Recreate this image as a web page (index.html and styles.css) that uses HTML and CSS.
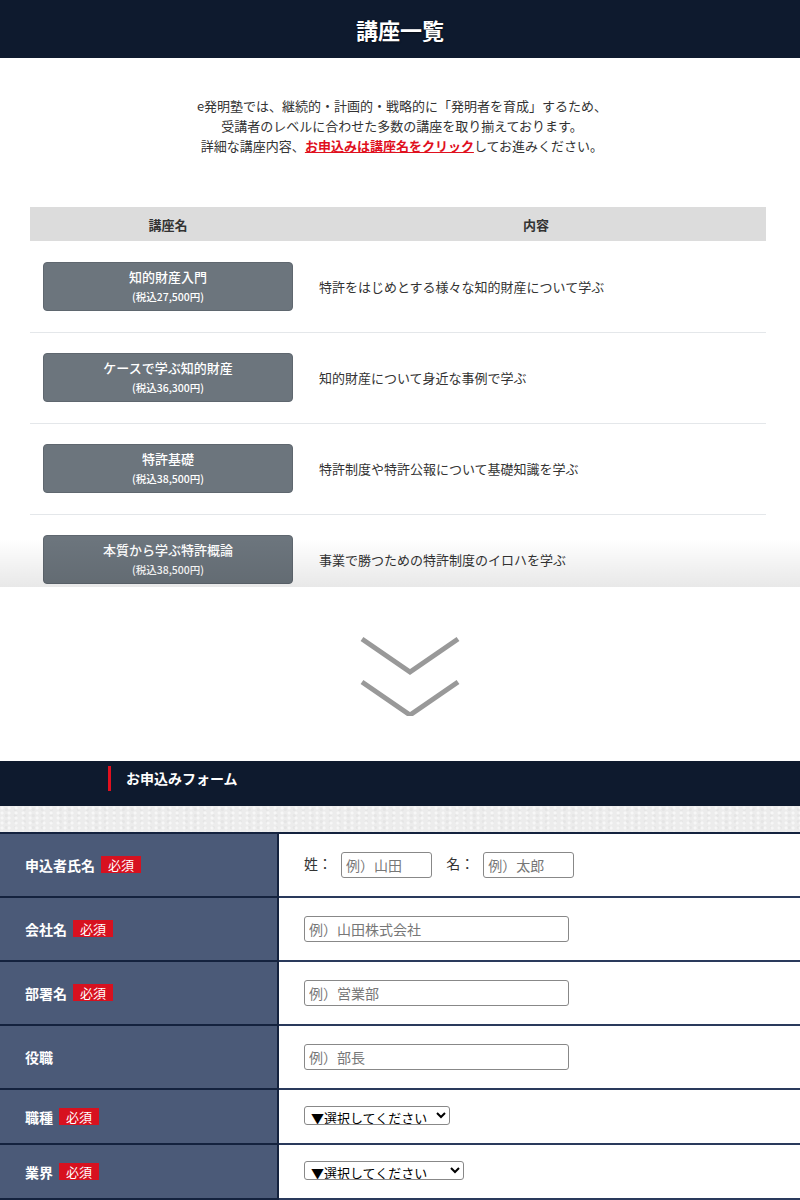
FILE: index.html
```html
<!DOCTYPE html>
<html lang="ja">
<head>
  <meta charset="UTF-8">
  <meta name="viewport" content="width=device-width, initial-scale=1">
  <title>講座一覧</title>
  <link rel="stylesheet" href="styles.css">
</head>
<body>

  <header class="page-title">
    <h1>講座一覧</h1>
  </header>

  <section class="courses">
    <p class="lead">
      e発明塾では、継続的・計画的・戦略的に「発明者を育成」するため、<br>
      受講者のレベルに合わせた多数の講座を取り揃えております。<br>
      詳細な講座内容、<a href="#form" class="lead-link">お申込みは講座名をクリック</a>してお進みください。
    </p>

    <table class="course-table">
      <thead>
        <tr>
          <th class="col-name">講座名</th>
          <th>内容</th>
        </tr>
      </thead>
      <tbody>
        <tr>
          <td><a href="#form" class="course-btn">知的財産入門<small>(税込27,500円)</small></a></td>
          <td>特許をはじめとする様々な知的財産について学ぶ</td>
        </tr>
        <tr>
          <td><a href="#form" class="course-btn">ケースで学ぶ知的財産<small>(税込36,300円)</small></a></td>
          <td>知的財産について身近な事例で学ぶ</td>
        </tr>
        <tr>
          <td><a href="#form" class="course-btn">特許基礎<small>(税込38,500円)</small></a></td>
          <td>特許制度や特許公報について基礎知識を学ぶ</td>
        </tr>
        <tr>
          <td><a href="#form" class="course-btn">本質から学ぶ特許概論<small>(税込38,500円)</small></a></td>
          <td>事業で勝つための特許制度のイロハを学ぶ</td>
        </tr>
      </tbody>
    </table>
    <div class="fade"></div>
  </section>

  <div class="arrow">
    <svg width="100" height="80" viewBox="0 0 100 80" aria-hidden="true">
      <polyline points="2,3 50,36 98,3" fill="none" stroke="#999" stroke-width="5"/>
      <polyline points="2,46 50,79 98,46" fill="none" stroke="#999" stroke-width="5"/>
    </svg>
  </div>

  <div class="form-head" id="form">
    <h2>お申込みフォーム</h2>
  </div>
  <div class="texture"></div>

  <table class="entry-form">
    <tr>
      <th>申込者氏名<span class="req">必須</span></th>
      <td>
        <label class="name-label">姓：</label><input class="input-s" type="text" placeholder="例）山田">
        <label class="name-label name-gap">名：</label><input class="input-s" type="text" placeholder="例）太郎">
      </td>
    </tr>
    <tr>
      <th>会社名<span class="req">必須</span></th>
      <td><input class="input-l" type="text" placeholder="例）山田株式会社"></td>
    </tr>
    <tr>
      <th>部署名<span class="req">必須</span></th>
      <td><input class="input-l" type="text" placeholder="例）営業部"></td>
    </tr>
    <tr>
      <th>役職</th>
      <td><input class="input-l" type="text" placeholder="例）部長"></td>
    </tr>
    <tr class="row-select">
      <th>職種<span class="req">必須</span></th>
      <td>
        <select class="select-job">
          <option>▼選択してください</option>
        </select>
      </td>
    </tr>
    <tr class="row-select">
      <th>業界<span class="req">必須</span></th>
      <td>
        <select class="select-ind">
          <option>▼選択してください</option>
        </select>
      </td>
    </tr>
  </table>

</body>
</html>
```

FILE: styles.css
```css
/* ベース */
* { box-sizing: border-box; }

body {
  margin: 0;
  font-family: "Noto Sans CJK JP", "Noto Sans", sans-serif;
  color: #333;
  background: #fff;
}

/* ページタイトル */
.page-title {
  background: #0e1a2e;
  height: 58px;
  display: flex;
  align-items: center;
  justify-content: center;
}
.page-title h1 {
  margin: 0;
  color: #fff;
  font-size: 22px;
  font-weight: 700;
  text-shadow: 0 1px 2px rgba(0,0,0,0.5);
}

/* 講座一覧 */
.courses {
  position: relative;
  height: 529px;
  overflow: hidden;
  padding: 38px 30px 0 34px;
}
.lead {
  margin: 0 0 51px;
  text-align: center;
  font-size: 13px;
  line-height: 20px;
  color: #333;
}
.lead-link {
  color: #e0101e;
  font-weight: 700;
  text-decoration: underline;
}

.course-table {
  width: 736px;
  margin-left: -4px;
  border-collapse: collapse;
  font-size: 13px;
}
.course-table th {
  background: #dcdcdc;
  height: 34px;
  font-weight: 700;
  color: #333;
}
.course-table .col-name { width: 276px; }
.course-table td {
  height: 91px;
  padding: 0 13px;
  border-bottom: 1px solid #e4e7ea;
}
.course-table td + td { padding-left: 13px; }

.course-btn {
  display: flex;
  flex-direction: column;
  align-items: center;
  justify-content: center;
  width: 250px;
  height: 49px;
  padding-top: 3px;
  background: #6c757d;
  border: 1px solid #5f676f;
  border-radius: 4px;
  color: #fff;
  text-decoration: none;
  font-size: 13px;
  font-weight: 500;
  line-height: 18px;
}
.course-btn small {
  font-size: 10.5px;
  line-height: 22px;
}

.fade {
  position: absolute;
  left: 0;
  right: 0;
  bottom: 0;
  height: 48px;
  background: linear-gradient(rgba(0,0,0,0), rgba(0,0,0,0.09));
}

/* 矢印 */
.arrow {
  height: 174px;
  display: flex;
  justify-content: center;
  padding: 49px 0 0 20px;
}

/* フォーム見出し */
.form-head {
  background: #0e1a2e;
  height: 45px;
  padding: 5px 0 0 108px;
}
.form-head h2 {
  margin: 0;
  height: 25px;
  border-left: 3px solid #e0101e;
  padding-left: 15px;
  color: #fff;
  font-size: 14px;
  font-weight: 700;
  line-height: 25px;
}
.texture {
  height: 26px;
  background:
    radial-gradient(circle at 30% 40%, rgba(255,255,255,0.6) 0 1px, transparent 2px) 0 0 / 7px 5px,
    radial-gradient(circle at 70% 60%, rgba(0,0,0,0.03) 0 1px, transparent 2px) 0 0 / 9px 6px,
    #ececec;
}

/* 申込フォーム */
.entry-form {
  width: 100%;
  border-collapse: collapse;
  border-top: 2px solid #14223e;
}
.entry-form th {
  width: 278px;
  height: 64px;
  background: #4b5a78;
  color: #fff;
  text-align: left;
  padding: 0 0 0 25px;
  font-size: 14px;
  font-weight: 700;
  border-bottom: 2px solid #14223e;
  border-right: 2px solid #14223e;
}
.entry-form td {
  padding: 0 0 0 25px;
  border-bottom: 2px solid #2a3a5c;
  font-size: 14px;
}
.entry-form .row-select th,
.entry-form .row-select td { height: 55px; }

.req {
  display: inline-block;
  margin-left: 6px;
  padding: 0 7px;
  background: #d7111f;
  color: #fff;
  font-size: 13px;
  font-weight: 400;
  line-height: 17px;
  vertical-align: 1px;
}

.name-label { color: #333; margin-right: 9px; }
.name-gap { margin-left: 11px; }

.entry-form input {
  height: 26px;
  border: 1px solid #888;
  border-radius: 3px;
  padding: 0 4px;
  font-family: inherit;
  font-size: 14px;
  color: #333;
  vertical-align: middle;
}
.entry-form input::placeholder { color: #777; }
.input-s { width: 91px; }
.input-l { width: 265px; }

.entry-form select {
  height: 19px;
  font-family: inherit;
  font-size: 13px;
  color: #000;
  border: 1px solid #888;
  border-radius: 3px;
  background: #fff;
  padding: 0 2px;
}
.select-job { width: 146px; }
.select-ind { width: 160px; }
```
